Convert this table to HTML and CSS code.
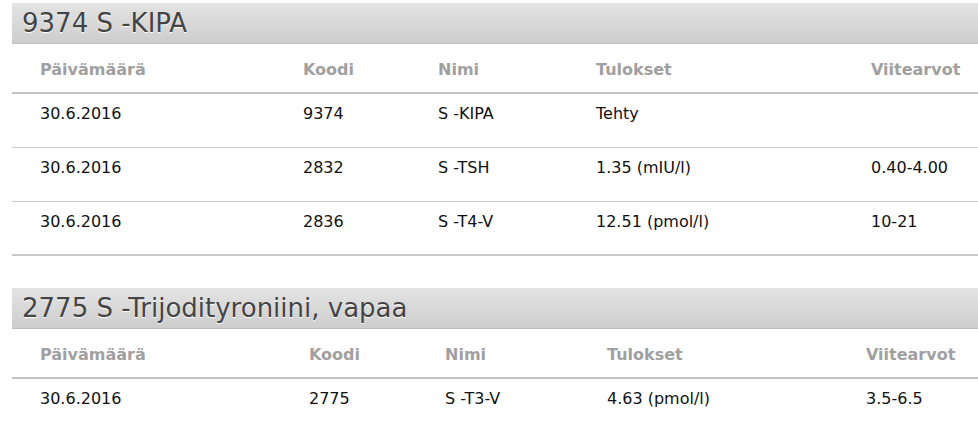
FILE: index.html
```html
<!DOCTYPE html>
<html lang="fi">
<head>
  <meta charset="UTF-8">
  <title>Tulokset</title>
  <link rel="stylesheet" href="styles.css">
</head>
<body>

  <div class="result-group">
    <h2 class="group-title">9374 S -KIPA</h2>
    <table class="results results-a">
      <colgroup>
        <col class="c1"><col class="c2"><col class="c3"><col class="c4"><col class="c5">
      </colgroup>
      <thead>
        <tr>
          <th>Päivämäärä</th>
          <th>Koodi</th>
          <th>Nimi</th>
          <th>Tulokset</th>
          <th>Viitearvot</th>
        </tr>
      </thead>
      <tbody>
        <tr><td>30.6.2016</td><td>9374</td><td>S -KIPA</td><td>Tehty</td><td></td></tr>
        <tr><td>30.6.2016</td><td>2832</td><td>S -TSH</td><td>1.35 (mIU/l)</td><td>0.40-4.00</td></tr>
        <tr><td>30.6.2016</td><td>2836</td><td>S -T4-V</td><td>12.51 (pmol/l)</td><td>10-21</td></tr>
      </tbody>
    </table>
  </div>

  <div class="result-group">
    <h2 class="group-title">2775 S -Trijodityroniini, vapaa</h2>
    <table class="results results-b">
      <colgroup>
        <col class="c1"><col class="c2"><col class="c3"><col class="c4"><col class="c5">
      </colgroup>
      <thead>
        <tr>
          <th>Päivämäärä</th>
          <th>Koodi</th>
          <th>Nimi</th>
          <th>Tulokset</th>
          <th>Viitearvot</th>
        </tr>
      </thead>
      <tbody>
        <tr><td>30.6.2016</td><td>2775</td><td>S -T3-V</td><td>4.63 (pmol/l)</td><td>3.5-6.5</td></tr>
      </tbody>
    </table>
  </div>

</body>
</html>
```

FILE: styles.css
```css
body {
  margin: 0;
  padding: 3px 0 0 12px;
  font-family: Verdana, "DejaVu Sans", sans-serif;
  background: #ffffff;
  color: #111;
}
.result-group {
  margin-bottom: 32px;
}
.group-title {
  margin: 0;
  height: 40px;
  padding-left: 10px;
  font-size: 26px;
  font-weight: normal;
  line-height: 41px;
  color: #444;
  text-shadow: 0 1px 1px #fff;
  background: linear-gradient(#e4e4e4, #cdcdcd);
  border-bottom: 1px solid #bdbdbd;
}
.results {
  width: 100%;
  table-layout: fixed;
  border-collapse: collapse;
  font-size: 16px;
  border-bottom: 2px solid #c8c8c8;
}
th, td {
  padding: 0 0 0 28px;
  text-align: left;
  white-space: nowrap;
}
th {
  height: 45px;
  padding-top: 3px;
  color: #a0a0a0;
  font-weight: bold;
  border-bottom: 2px solid #c4c4c4;
}
td {
  height: 54px;
  padding-top: 10px;
  vertical-align: top;
  border-bottom: 1px solid #cccccc;
  box-sizing: border-box;
}
tbody tr:last-child td {
  border-bottom: none;
}
.results-a .c1 { width: 263px; }
.results-a .c2 { width: 135px; }
.results-a .c3 { width: 158px; }
.results-a .c4 { width: 275px; }
.results-b .c1 { width: 269px; }
.results-b .c2 { width: 136px; }
.results-b .c3 { width: 162px; }
.results-b .c4 { width: 259px; }
```
